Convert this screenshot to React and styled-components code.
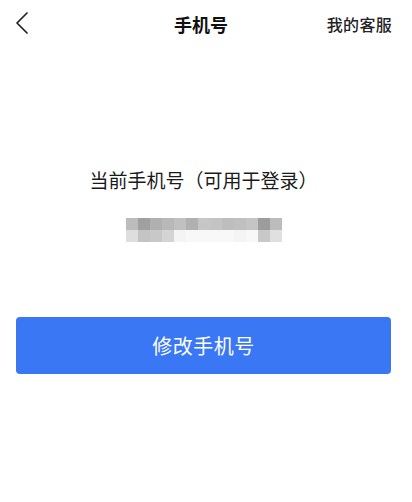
import React from "react";
import styled, { createGlobalStyle } from "styled-components";

const GlobalStyle = createGlobalStyle`
  html, body {
    margin: 0;
    padding: 0;
    background: #ffffff;
  }
  body {
    font-family: "Noto Sans CJK SC", "Noto Sans", sans-serif;
    color: #1a1a1a;
  }
`;

const Page = styled.div`
  width: 412px;
  min-height: 502px;
  display: flex;
  flex-direction: column;
  background: #fff;
`;

const NavBar = styled.header`
  height: 48px;
  display: grid;
  grid-template-columns: 100px 1fr 100px;
  align-items: center;
  padding: 0 20px 0 10px;
  box-sizing: border-box;
`;

const BackButton = styled.button`
  width: 24px;
  height: 28px;
  padding: 0;
  border: 0;
  background: none;
  display: flex;
  align-items: center;
  justify-content: center;
  margin-top: -3px;
`;

const Title = styled.h1`
  margin: 0;
  text-align: center;
  font-size: 18px;
  font-weight: 700;
  color: #111;
`;

const ServiceLink = styled.span`
  justify-self: end;
  font-size: 16px;
  font-weight: 500;
  color: #222;
  letter-spacing: 0.3px;
`;

const Content = styled.main`
  display: flex;
  flex-direction: column;
  align-items: center;
  padding: 119px 21px 0 16px;
`;

const Label = styled.p`
  margin: 0;
  font-size: 19px;
  line-height: 26px;
  color: #1a1a1a;
`;

const Mosaic = styled.div`
  margin-top: 25px;
  display: grid;
  grid-template-columns: repeat(13, 12px);
  grid-auto-rows: 12px;
`;

const Tile = styled.span`
  background: ${(p) => p.$tone};
`;

const PrimaryButton = styled.button`
  margin-top: 75px;
  width: 100%;
  height: 57px;
  border: 0;
  border-radius: 4px;
  background: #3a77f5;
  color: #fff;
  font-family: inherit;
  font-size: 20px;
  letter-spacing: 0.5px;
  display: flex;
  align-items: center;
  justify-content: center;
`;

// masked phone number, rendered as a pixelated strip
const tones = [
  "#bcbcbc", "#a0a0a0", "#b0b0b0", "#b8b8b8", "#c0c0c0", "#b0b0b0", "#c6c6c6",
  "#c4c4c4", "#bebebe", "#c0c0c0", "#c4c4c4", "#9c9c9c", "#bcbcbc",
  "#dedede", "#c4c4c4", "#c8c8c8", "#d4d4d4", "#f4f4f4", "#f8f8f8", "#f8f8f8",
  "#f8f8f8", "#f8f8f8", "#f4f4f4", "#f8f8f8", "#c8c8c8", "#e0e0e0",
];

export default function App() {
  return (
    <>
      <GlobalStyle />
      <Page>
        <NavBar>
          <BackButton aria-label="返回">
            <svg width="14" height="22" viewBox="0 0 14 22" fill="none">
              <path
                d="M12 1 L2 11 L12 21"
                stroke="#222"
                strokeWidth="1.7"
                strokeLinecap="round"
                strokeLinejoin="round"
              />
            </svg>
          </BackButton>
          <Title>手机号</Title>
          <ServiceLink>我的客服</ServiceLink>
        </NavBar>
        <Content>
          <Label>当前手机号（可用于登录）</Label>
          <Mosaic>
            {tones.map((t, i) => (
              <Tile key={i} $tone={t} />
            ))}
          </Mosaic>
          <PrimaryButton>修改手机号</PrimaryButton>
        </Content>
      </Page>
    </>
  );
}
